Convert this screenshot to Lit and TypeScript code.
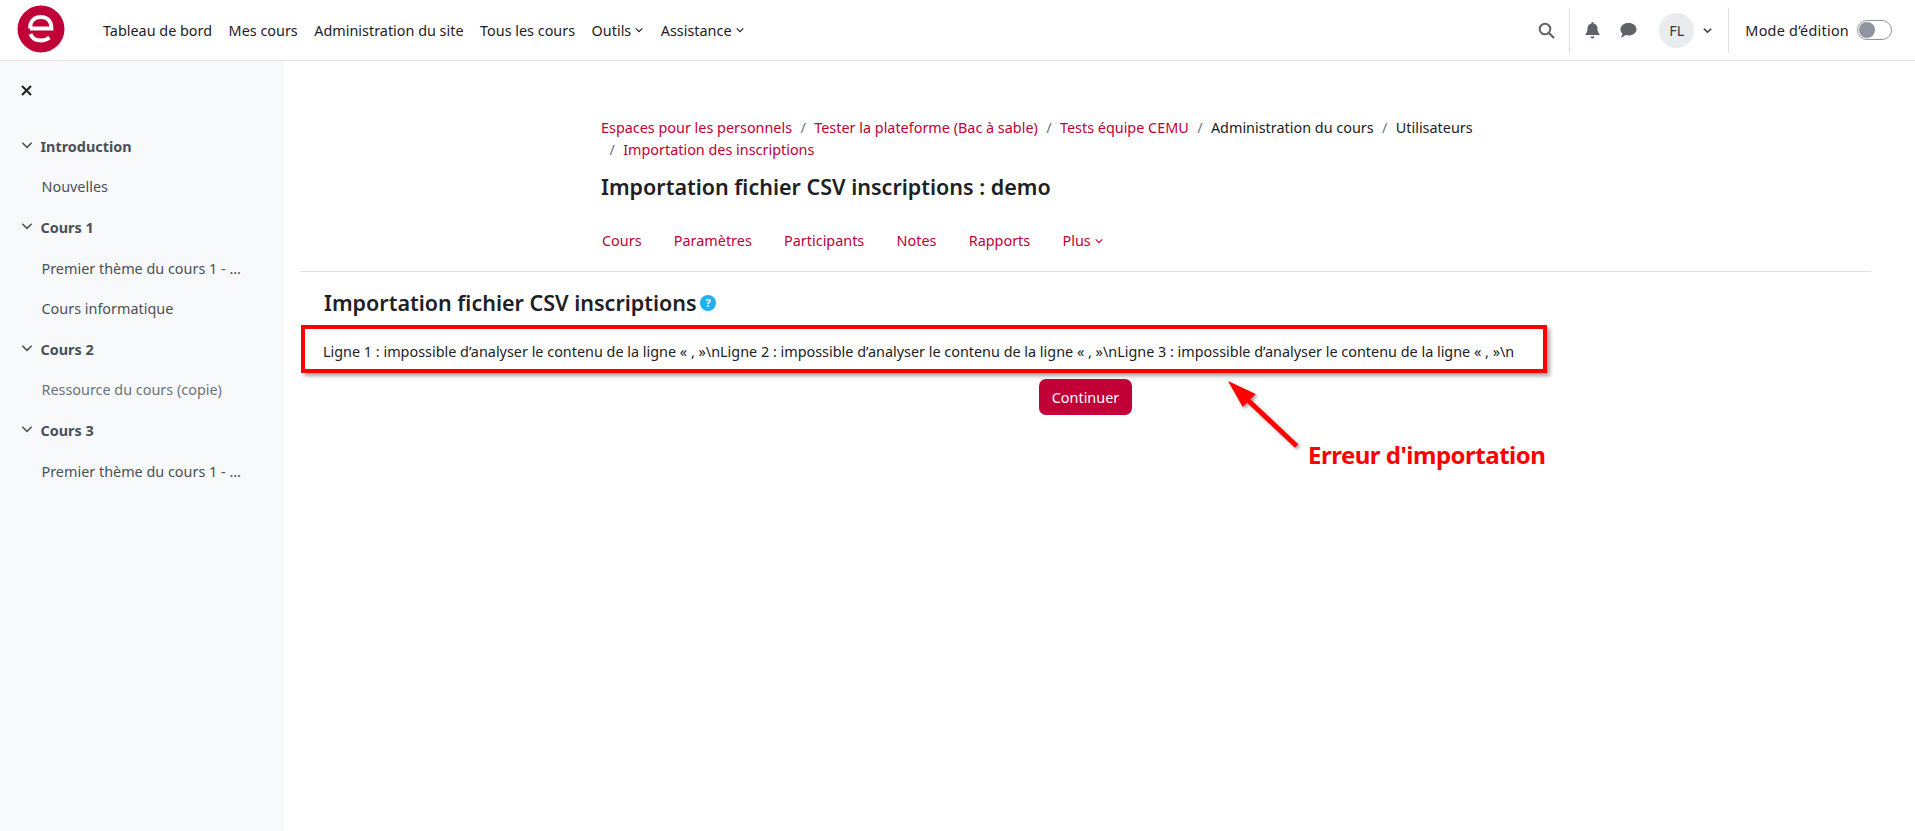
import { LitElement, html, css, svg } from "lit";
import { customElement } from "lit/decorators.js";

const chev = (s: number, c = "currentColor", w = 1.3) => html`<svg class="chev" width=${s} height=${s} viewBox="0 0 12 12"><path d="M2 4l4 4 4-4" fill="none" stroke=${c} stroke-width=${w}/></svg>`;

@customElement("app-root")
export class AppRoot extends LitElement {
  static styles = css`
    :host { display: block; height: 831px; width: 1915px; overflow: hidden; position: relative; background: #fff; font-family: "Noto Sans", "Open Sans", sans-serif; font-size: 14.4px; color: #1d2125; --brand: #c10037; }
    * { box-sizing: border-box; }
    header { height: 61px; border-bottom: 1px solid #dee2e6; display: flex; align-items: center; padding-left: 17px; background: #fff; }
    .logo { width: 48px; height: 48px; margin: 0 38px 2px 0; flex: none; }
    nav.prim { display: flex; gap: 16.5px; align-items: center; }
    nav.prim span { display: flex; align-items: center; gap: 3px; white-space: nowrap; }
    .right { margin-left: auto; display: flex; align-items: center; height: 45px; padding-right: 23px; }
    .search { margin-right: 14px; display: flex; }
    .sep { width: 1px; height: 45px; background: #dee2e6; }
    .bell { margin-left: 15px; display: flex; }
    .msg { margin-left: 20px; display: flex; }
    .avatar { margin-left: 22px; width: 35px; height: 35px; border-radius: 50%; background: #e9ecef; display: flex; align-items: center; justify-content: center; color: #343a40; }
    .uchev { margin: 0 15px 0 8px; display: flex; color: #343a40; }
    .mode { margin-left: 16px; white-space: nowrap; letter-spacing: .25px; }
    .toggle { margin-left: 8px; width: 35px; height: 20px; border: 1px solid #8f959e; border-radius: 10px; background: #fff; padding: 1px; display: flex; }
    .toggle i { width: 16px; height: 16px; border-radius: 50%; background: #8f959e; display: block; }
    .body { display: flex; height: 770px; }
    aside { width: 284px; flex: none; background: #f8f9fa; padding: 19px 0 0 20px; color: #495057; }
    .close { height: 20px; display: flex; align-items: center; margin-bottom: 26px; color: #1d2125; padding-left: 1px; }
    .sec, .it { height: 40.6px; display: flex; align-items: center; white-space: nowrap; }
    .sec { font-weight: 700; gap: 6.5px; color: #495057; }
    .sec .chev { margin-top: -2px; }
    .it { padding-left: 21.5px; }
    .it.dim { color: #6a737b; }
    main { flex: 1; min-width: 0; padding: 56px 0 0 16px; }
    .bc { margin-left: 301px; width: 970px; line-height: 22px; }
    .bc a { color: var(--brand); }
    .bc .s { margin: 0 8.4px; color: #6a737b; }
    .bc .l { color: #1d2125; }
    h1 { margin: 12px 0 0 301px; font-size: 21.5px; line-height: 28px; font-weight: 600; }
    .tabs { margin: 24px 0 0 302px; display: flex; gap: 32.3px; color: var(--brand); height: 46px; padding-top: 6px; }
    .tabs span { display: flex; align-items: flex-start; gap: 3px; line-height: 20px; }
    .tabs .chev { margin-top: 5px; }
    .rule { height: 1px; background: #dee2e6; width: 1571px; }
    h2 { margin: 17px 0 0 24px; font-size: 21.5px; line-height: 28px; font-weight: 600; display: flex; align-items: center; gap: 3px; }
    .msgline { margin: 23px 0 0 23px; line-height: 24px; white-space: nowrap; }
    .btnrow { display: flex; justify-content: center; width: 1571px; margin-top: 15px; }
    button { width: 93px; height: 36px; background: var(--brand); color: #fff; border: 0; border-radius: 7px; font: inherit; }
    .box { position: absolute; left: 301px; top: 325px; width: 1246px; height: 48px; border: 4px solid #f00; box-shadow: 3px 3px 4px rgba(0,0,0,.35); }
    .arrow { position: absolute; left: 1220px; top: 375px; }
    .note { position: absolute; left: 1308px; top: 438px; font-size: 24px; letter-spacing: -.5px; font-weight: 700; color: #f00; line-height: 34px; white-space: nowrap; }
  `;

  render() {
    return html`
      <header>
        <svg class="logo" viewBox="0 0 48 48"><circle cx="24" cy="24" r="23.500" fill="#c10037"/><path d="M13 23.500C13 15.500 18 12 24 12c6 0 10.500 4 10.500 11.500H13M13.500 29c1.500 4 5.500 6.500 10.500 6.500 3.500 0 6-1 8.500-3" fill="none" stroke="#fff" stroke-width="3.800"/></svg>
        <nav class="prim">
          <span>Tableau de bord</span><span>Mes cours</span><span>Administration du site</span><span>Tous les cours</span>
          <span>Outils ${chev(10)}</span><span>Assistance ${chev(10)}</span>
        </nav>
        <div class="right">
          <span class="search"><svg width="17" height="17" viewBox="0 0 17 17"><circle cx="7" cy="7" r="5.300" fill="none" stroke="#5f6368" stroke-width="2"/><path d="M11 11l5 5" stroke="#5f6368" stroke-width="2.200"/></svg></span>
          <span class="sep"></span>
          <span class="bell"><svg width="15" height="17" viewBox="0 0 15 17"><path d="M7.500 0a1.300 1.300 0 011.200 1.500c2.500.6 3.800 2.700 3.800 5 0 3.500 1.200 4.500 2 5.500v1H.5v-1c.8-1 2-2 2-5.500 0-2.300 1.300-4.400 3.800-5A1.300 1.300 0 017.500 0zM5.500 14.500h4a2 2 0 01-4 0z" fill="#5f6368"/></svg></span>
          <span class="msg"><svg width="17" height="15" viewBox="0 0 17 15"><path d="M8.500 0C13 0 16.500 2.700 16.500 6.200S13 12.500 8.500 12.500c-1 0-2-.1-2.900-.4C4.500 13.200 2.800 14.500.5 14.500c1.200-1.100 1.900-2.500 2-3.800C1.200 9.600.5 8 .5 6.200.5 2.700 4 0 8.500 0z" fill="#5f6368"/></svg></span>
          <span class="avatar">FL</span>
          <span class="uchev">${chev(11, "currentColor", 1.6)}</span>
          <span class="sep"></span>
          <span class="mode">Mode d’édition</span>
          <span class="toggle"><i></i></span>
        </div>
      </header>
      <div class="body">
        <aside>
          <div class="close"><svg width="11" height="11" viewBox="0 0 11 11"><path d="M1 1l9 9M10 1l-9 9" stroke="#1d2125" stroke-width="2"/></svg></div>
          <div class="sec">${chev(14)}Introduction</div>
          <div class="it">Nouvelles</div>
          <div class="sec">${chev(14)}Cours 1</div>
          <div class="it">Premier thème du cours 1 - …</div>
          <div class="it">Cours informatique</div>
          <div class="sec">${chev(14)}Cours 2</div>
          <div class="it dim">Ressource du cours (copie)</div>
          <div class="sec">${chev(14)}Cours 3</div>
          <div class="it">Premier thème du cours 1 - …</div>
        </aside>
        <main>
          <div class="bc">
            <a>Espaces pour les personnels</a><span class="s">/</span><a>Tester la plateforme (Bac à sable)</a><span class="s">/</span><a>Tests équipe CEMU</a><span class="s">/</span><span class="l">Administration du cours</span><span class="s">/</span><span class="l">Utilisateurs</span><br /><span class="s">/</span><a>Importation des inscriptions</a>
          </div>
          <h1>Importation fichier CSV inscriptions : demo</h1>
          <div class="tabs"><span>Cours</span><span>Paramètres</span><span>Participants</span><span>Notes</span><span>Rapports</span><span>Plus ${chev(10)}</span></div>
          <div class="rule"></div>
          <h2>Importation fichier CSV inscriptions
            <svg width="16" height="16" viewBox="0 0 16 16"><circle cx="8" cy="8" r="8" fill="#1fb0f0"/><text x="8" y="12" text-anchor="middle" font-size="11" font-weight="700" fill="#fff" font-family="Noto Sans">?</text></svg>
          </h2>
          <div class="msgline">Ligne 1 : impossible d’analyser le contenu de la ligne « , »\\nLigne 2 : impossible d’analyser le contenu de la ligne « , »\\nLigne 3 : impossible d’analyser le contenu de la ligne « , »\\n</div>
          <div class="btnrow"><button>Continuer</button></div>
        </main>
      </div>
      <div class="box"></div>
      <svg class="arrow" width="100" height="90" viewBox="0 0 100 90">
        <defs><filter id="s" x="-20%" y="-20%" width="150%" height="150%"><feDropShadow dx="2" dy="2" stdDeviation="1.500" flood-opacity=".35"/></filter></defs>
        <g filter="url(#s)">${svg`<path d="M8 6L35.700 19 30.500 24.200 78.300 69.200 74.900 72.800 27.100 27.800 22.700 32z" fill="#f00"/>`}</g>
      </svg>
      <div class="note">Erreur d'importation</div>
    `;
  }
}
